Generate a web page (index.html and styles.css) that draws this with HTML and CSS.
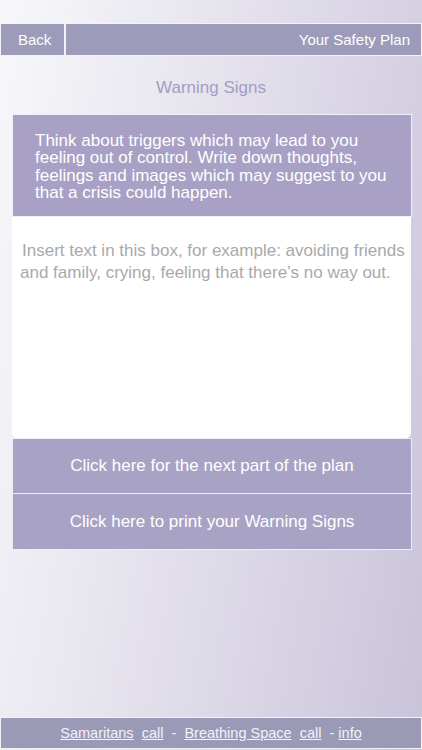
FILE: index.html
```html
<!DOCTYPE html>
<html>
<head>
<meta charset="utf-8">
<link rel="stylesheet" href="styles.css">
</head>
<body>
<div class="page">
  <div class="topbar">
    <a class="back">Back</a>
    <div class="bar-title">Your Safety Plan</div>
  </div>
  <h1 class="heading">Warning Signs</h1>
  <div class="card">
    <div class="intro">Think about triggers which may lead to you feeling out of control. Write down thoughts, feelings and images which may suggest to you that a crisis could happen.</div>
    <textarea class="entry" placeholder="Insert text in this box, for example: avoiding friends and family, crying, feeling that there’s no way out."></textarea>
    <a class="btn">Click here for the next part of the plan</a>
    <a class="btn">Click here to print your Warning Signs</a>
  </div>
  <div class="spacer"></div>
  <div class="footer">
    <a class="flink">Samaritans</a>&nbsp; <a class="flink">call</a> &nbsp;-&nbsp; <a class="flink">Breathing Space</a>&nbsp; <a class="flink">call</a> &nbsp;- <a class="flink">info</a>
  </div>
</div>
</body>
</html>
```
FILE: styles.css
```css
html, body {
  margin: 0;
  padding: 0;
}
body {
  font-family: "Liberation Sans", Arial, sans-serif;
  background: linear-gradient(100deg, #f8f8fa 0%, #e4e1ec 45%, #c9c3da 100%);
  width: 422px;
  height: 750px;
  overflow: hidden;
}
.page {
  display: flex;
  flex-direction: column;
  height: 750px;
}
.topbar {
  margin-top: 23px;
  display: flex;
  height: 31px;
  border: 1px solid #f4f4f8;
  background: #9c9bba;
  color: #fff;
  font-size: 15px;
}
.back {
  width: 65px;
  border-right: 2px solid #f4f4f8;
  display: flex;
  align-items: center;
  padding-left: 17px;
  box-sizing: border-box;
}
.bar-title {
  flex: 1;
  display: flex;
  align-items: center;
  justify-content: flex-end;
  padding-right: 11px;
}
.heading {
  margin: 22px 0 0;
  height: 36px;
  font-weight: normal;
  font-size: 17px;
  color: #a29ec2;
  text-align: center;
}
.card {
  margin: 0 10px 0 12px;
  display: flex;
  flex-direction: column;
}
.intro {
  background: #a8a1c5;
  border: 1px solid #f0eef6;
  color: #fff;
  font-size: 17px;
  line-height: 17.4px;
  padding: 17px 22px 14px 22px;
  height: 70px;
}
.entry {
  display: block;
  box-sizing: border-box;
  width: 399px;
  height: 221px;
  margin: 0;
  border: none;
  border-radius: 0 0 5px 5px;
  background: #fff;
  padding: 23px 4px 0 8px;
  text-indent: 2px;
  font-family: "Liberation Sans", Arial, sans-serif;
  font-size: 17px;
  line-height: 22px;
  outline: none;
  resize: none;
}
.entry::placeholder {
  color: #a9a9ab;
}
.btn {
  display: flex;
  align-items: center;
  justify-content: center;
  height: 54px;
  background: #a8a2c5;
  border: 1px solid #eeecf5;
  color: #fff;
  font-size: 17px;
}
.btn + .btn {
  border-top: none;
  height: 55px;
}
.spacer {
  flex: 1;
}
.footer {
  margin-bottom: 1px;
  height: 30px;
  border: 1px solid #f2f2f6;
  background: #9a9ab7;
  display: flex;
  align-items: center;
  justify-content: center;
  color: #f2f2f8;
  font-size: 14.5px;
  white-space: pre;
}
.flink {
  text-decoration: underline;
  color: #f2f2f8;
}
```
